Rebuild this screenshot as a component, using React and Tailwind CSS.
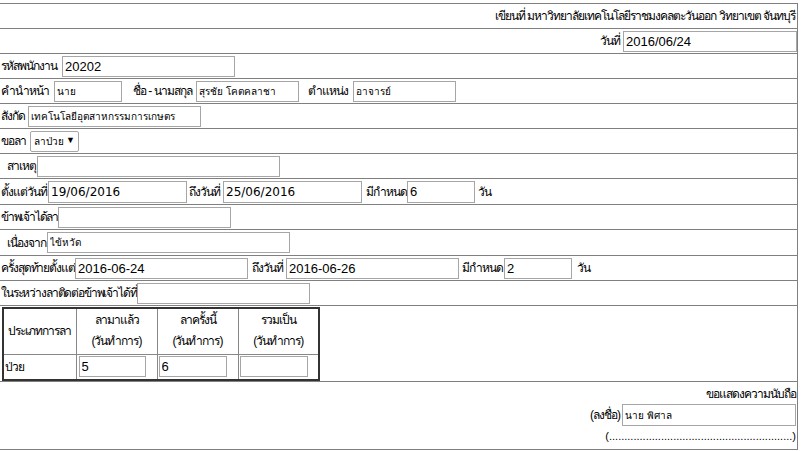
import React from "react";

const box = "h-[21px] shrink-0 border border-[#a6a6a6] bg-white px-[2px] text-black outline-none tracking-normal";
const big = "text-[13px] font-['Liberation_Sans',sans-serif]";
const small = "text-[10px]";
const dated = "text-[12px] font-['DejaVu_Sans',sans-serif]";
const off = "bg-[#ebebe4] text-[#6d6d6d]";
const row = "flex items-center border-b border-[#808080] whitespace-nowrap";

function Field({ w, value = "", size = big, disabled = false, h = "h-[21px]" }) {
  return (
    <input
      className={`${box} ${h} ${size} ${disabled ? off : ""}`}
      style={{ width: w }}
      defaultValue={value}
      disabled={disabled}
      readOnly={!disabled}
    />
  );
}

export default function App() {
  return (
    <div className="w-[801px] h-[451px] overflow-hidden bg-white pt-[3px] text-[12px] tracking-[-1px] text-black font-['Liberation_Sans','Noto_Sans',sans-serif]">
      <div className="w-[798px] border-t border-r border-[#808080]">
        <div className={`${row} h-[25px] justify-end pr-[2px]`}>
          เขียนที่ มหาวิทยาลัยเทคโนโลยีราชมงคลตะวันออก วิทยาเขต จันทบุรี
        </div>

        <div className={`${row} h-[25px] justify-end gap-[3px]`}>
          <span>วันที่</span>
          <Field w={174} value="2016/06/24" />
        </div>

        <div className={`${row} h-[25px] pl-[1px]`}>
          <span className="min-w-[61px]">รหัสพนักงาน</span>
          <Field w={173} value="20202" />
        </div>

        <div className={`${row} h-[25px] pl-[1px]`}>
          <span className="min-w-[53px]">คำนำหน้า</span>
          <Field w={68} value="นาย" size={small} />
          <span className="min-w-[74px] pl-[11px] pr-[2px]">ชื่อ - นามสกุล</span>
          <Field w={103} value="สุรชัย โคตคลาชา" size={small} />
          <span className="min-w-[54px] pl-[9px] pr-[2px]">ตำแหน่ง</span>
          <Field w={103} value="อาจารย์" size={small} />
        </div>

        <div className={`${row} h-[25px] pl-[1px]`}>
          <span className="min-w-[27px] pr-[1px]">สังกัด</span>
          <Field w={173} value="เทคโนโลยีอุตสาหกรรมการเกษตร" size={small} />
        </div>

        <div className={`${row} h-[25px] pl-[1px]`}>
          <span className="min-w-[29px] pr-[1px]">ขอลา</span>
          <div className="flex h-[21px] w-[49px] shrink-0 items-center justify-between rounded-[2px] border border-[#a6a6a6] px-[3px] text-[10px] tracking-normal">
            <span>ลาป่วย</span>
            <span className="text-[9px]">▼</span>
          </div>
        </div>

        <div className={`${row} h-[25px] pl-[7px]`}>
          <span className="min-w-[30px] pr-[1px]">สาเหตุ</span>
          <Field w={243} />
        </div>

        <div className={`${row} h-[26px] pl-[1px]`}>
          <span className="min-w-[47px]">ตั้งแต่วันที่</span>
          <Field w={139} h="h-[22px]" value="19/06/2016" size={dated} />
          <span className="min-w-[36px] pl-[2px] pr-[1px]">ถึงวันที่</span>
          <Field w={139} h="h-[22px]" value="25/06/2016" size={dated} />
          <span className="min-w-[45px] pl-[4px]">มีกำหนด</span>
          <Field w={68} h="h-[22px]" value="6" />
          <span className="pl-[3px]">วัน</span>
        </div>

        <div className={`${row} h-[25px] pl-[1px]`}>
          <span className="min-w-[57px] tracking-[-1.2px]">ข้าพเจ้าได้ลา</span>
          <Field w={173} />
        </div>

        <div className={`${row} h-[26px] pl-[7px]`}>
          <span className="min-w-[40px]">เนื่องจาก</span>
          <Field w={243} value="ไข้หวัด" size={small} disabled />
        </div>

        <div className={`${row} h-[25px] pl-[1px]`}>
          <span className="min-w-[74px] tracking-[-1.1px]">ครั้งสุดท้ายตั้งแต่</span>
          <Field w={173} value="2016-06-24" disabled />
          <span className="min-w-[38px] pl-[4px]">ถึงวันที่</span>
          <Field w={173} value="2016-06-26" disabled />
          <span className="min-w-[45px] pl-[3px]">มีกำหนด</span>
          <Field w={68} value="2" disabled />
          <span className="pl-[5px]">วัน</span>
        </div>

        <div className={`${row} h-[25px] pl-[1px]`}>
          <span className="min-w-[136px] tracking-[-1.15px]">ในระหว่างลาติดต่อข้าพเจ้าได้ที่</span>
          <Field w={173} />
        </div>

        <div className={`${row} h-[76px] items-start pl-[2px] pt-[1px]`}>
          <table className="w-[318px] table-fixed border-collapse border-2 border-[#333]">
            <colgroup>
              <col className="w-[73px]" />
              <col className="w-[81px]" />
              <col className="w-[81px]" />
              <col />
            </colgroup>
            <thead>
              <tr className="h-[46px]">
                <th className="border border-[#888] font-normal">ประเภทการลา</th>
                <th className="border border-[#888] font-normal leading-[21px]">
                  ลามาแล้ว
                  <br />
                  (วันทำการ)
                </th>
                <th className="border border-[#888] font-normal leading-[21px]">
                  ลาครั้งนี้
                  <br />
                  (วันทำการ)
                </th>
                <th className="border border-[#888] font-normal leading-[21px]">
                  รวมเป็น
                  <br />
                  (วันทำการ)
                </th>
              </tr>
            </thead>
            <tbody>
              <tr className="h-[26px]">
                <td className="border border-[#888] pl-[1px]">ป่วย</td>
                <td className="border border-[#888] pl-[2px]">
                  <Field w={67} value="5" disabled />
                </td>
                <td className="border border-[#888] pl-[1px]">
                  <Field w={68} value="6" />
                </td>
                <td className="border border-[#888] pl-[1px]">
                  <Field w={68} />
                </td>
              </tr>
            </tbody>
          </table>
        </div>

        <div className="flex h-[68px] flex-col items-end border-b border-[#808080] pt-[2px] pr-[1px]">
          <div className="h-[20px] leading-[20px]">ขอแสดงความนับถือ</div>
          <div className="flex items-center gap-[2px]">
            <span>(ลงชื่อ)</span>
            <Field w={174} h="h-[22px]" value="นาย พิศาล" size={small} />
          </div>
          <div className="pt-[2px] text-[11px] leading-[16px] tracking-normal">
            (............................................................)
          </div>
        </div>
      </div>
    </div>
  );
}
